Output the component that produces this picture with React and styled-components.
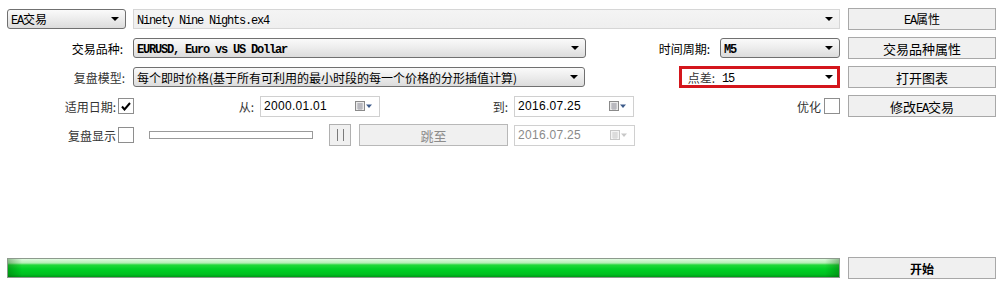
import React from 'react';
import styled, { createGlobalStyle } from 'styled-components';

const GlobalStyle = createGlobalStyle`
  body {
    margin: 0;
    background: #ffffff;
    font-family: "Noto Sans CJK SC", "Liberation Sans", sans-serif;
    font-size: 12px;
    color: #000;
  }
`;

const Page = styled.div`
  width: 1007px;
  height: 287px;
  box-sizing: border-box;
  padding: 8px 11px 8px 7px;
  display: flex;
  flex-direction: column;
  justify-content: space-between;
`;

const Top = styled.div`
  display: flex;
  gap: 8px;
`;

const Left = styled.div`
  width: 833px;
  display: flex;
  flex-direction: column;
  gap: 9px;
  padding-top: 1px;
`;

const Row = styled.div`
  height: 20px;
  display: flex;
  align-items: center;
`;

const Label = styled.div`
  width: ${p => p.$w}px;
  text-align: right;
  padding-right: ${p => p.$pr ?? 4}px;
  box-sizing: border-box;
  white-space: nowrap;
  flex-shrink: 0;
  color: ${p => (p.$light ? '#333' : '#000')};
`;

const Combo = styled.div`
  width: ${p => p.$w}px;
  height: 20px;
  box-sizing: border-box;
  border: 1px solid #707070;
  border-radius: 3px;
  background: linear-gradient(#fafafa, #ececec 50%, #dcdcdc);
  display: flex;
  align-items: center;
  padding: 0 6px 0 3px;
  white-space: nowrap;
  overflow: hidden;
`;

const FlatCombo = styled.div`
  flex: 1;
  margin-left: ${p => p.$ml || 0}px;
  height: ${p => (p.$plain ? 16 : 20)}px;
  box-sizing: border-box;
  border: ${p => (p.$plain ? 'none' : '1px solid #d6d6d6')};
  background: ${p => (p.$plain ? '#ffffff' : 'linear-gradient(#f4f4f4, #efefef)')};
  display: flex;
  align-items: center;
  padding: 0 ${p => (p.$plain ? 4 : 6)}px 0 3px;
  white-space: nowrap;
`;

const Mono = styled.span`
  font-family: "Liberation Mono", monospace;
  font-size: 12px;
  letter-spacing: -1.2px;
  font-weight: ${p => (p.$bold ? 700 : 400)};
`;

const ComboText = styled.span`
  flex: 1;
  overflow: hidden;
`;

const Arrow = styled.span`
  width: 0;
  height: 0;
  border-left: 4px solid transparent;
  border-right: 4px solid transparent;
  border-top: 4px solid ${p => p.$c || '#000'};
  flex-shrink: 0;
`;

const RedBox = styled.div`
  margin-left: 94px;
  width: 161px;
  height: 22px;
  flex-shrink: 0;
  box-sizing: border-box;
  border: 3px solid #d4161c;
  background: #fff;
  display: flex;
  align-items: center;
`;

const Check = styled.div`
  width: 16px;
  height: 16px;
  box-sizing: border-box;
  border: 1px solid #8e8e8e;
  background: #fff;
  display: flex;
  align-items: center;
  justify-content: center;
  flex-shrink: 0;
`;

const DateBox = styled.div`
  width: 121px;
  margin-left: ${p => p.$ml || 0}px;
  height: 21px;
  box-sizing: border-box;
  border: 1px solid #d0d0d0;
  background: #fff;
  display: flex;
  align-items: center;
  padding: 0 6px 0 3px;
  color: ${p => (p.$disabled ? '#8a8a8a' : '#000')};
`;

const DateText = styled.span`
  flex: 1;
  font-family: "Liberation Sans", sans-serif;
  font-size: 12px;
  letter-spacing: 0.3px;
`;

const Track = styled.div`
  width: 164px;
  height: 8px;
  margin-left: 15px;
  box-sizing: border-box;
  border: 1px solid #9a9a9a;
  background: #fff;
`;

const SmallBtn = styled.div`
  width: 22px;
  height: 22px;
  margin-left: 16px;
  box-sizing: border-box;
  border: 1px solid #b0b0b0;
  background: #f0f0f0;
  display: flex;
  align-items: center;
  justify-content: center;
  gap: 5px;
`;

const Bar = styled.span`
  width: 1px;
  height: 12px;
  background: #7a7a7a;
`;

const Button = styled.div`
  width: ${p => p.$w || 148}px;
  margin-left: ${p => p.$ml || 0}px;
  height: 22px;
  box-sizing: border-box;
  border: 1px solid ${p => (p.$disabled ? '#b8b8b8' : '#a8a8a8')};
  background: #f0f0f0;
  display: flex;
  align-items: center;
  justify-content: center;
  color: ${p => (p.$disabled ? '#8c8c8c' : '#000')};
  font-weight: ${p => (p.$bold ? 700 : 400)};
  font-size: ${p => (p.$big ? 13 : 12)}px;
`;

const ButtonText = styled.span`
  white-space: nowrap;
`;

const Buttons = styled.div`
  display: flex;
  flex-direction: column;
  gap: 7px;
`;

const Bottom = styled.div`
  display: flex;
  align-items: center;
  gap: 8px;
`;

const Progress = styled.div`
  width: 833px;
  height: 20px;
  box-sizing: border-box;
  border: 1px solid #8d9a8d;
  background:
    linear-gradient(90deg, rgba(0, 80, 0, 0.35), rgba(0, 0, 0, 0) 14px, rgba(0, 0, 0, 0) calc(100% - 14px), rgba(0, 80, 0, 0.35)),
    linear-gradient(#e0fae0 0, #b4eeb4 4px, #22d83a 6px, #00d125 55%, #00c020 85%, #009a18 100%);
`;

const Calendar = ({ disabled }) => (
  <svg width="18" height="10" viewBox="0 0 18 10" style={{ flexShrink: 0 }}>
    <rect x="0.5" y="0.5" width="9" height="9" fill={disabled ? '#f4f4f4' : '#eaeaea'} stroke={disabled ? '#c8c8c8' : '#8a8a8a'} />
    <path d="M2 3h6M2 5h6M2 7h6M4 2v7M6 2v7" stroke={disabled ? '#d4d4d4' : '#a8a8b0'} strokeWidth="1" />
    <path d="M11 3.5h6l-3 3.5z" fill={disabled ? '#c8c8c8' : '#3c5a8a'} />
  </svg>
);

const Tick = () => (
  <svg width="10" height="9" viewBox="0 0 10 9">
    <path d="M1 4.5l2.5 3L9 1" fill="none" stroke="#000" strokeWidth="2" />
  </svg>
);

export default function App() {
  return (
    <Page>
      <GlobalStyle />
      <Top>
        <Left>
          <Row>
            <Combo $w={119}>
              <ComboText><Mono>EA</Mono>交易</ComboText>
              <Arrow />
            </Combo>
            <FlatCombo $ml={7}>
              <ComboText><Mono>Ninety Nine Nights.ex4</Mono></ComboText>
              <Arrow />
            </FlatCombo>
          </Row>
          <Row>
            <Label $w={126} $pr={10}>交易品种:</Label>
            <Combo $w={453}>
              <ComboText><Mono $bold>EURUSD, Euro vs US Dollar</Mono></ComboText>
              <Arrow />
            </Combo>
            <Label $w={134} $pr={10}>时间周期:</Label>
            <Combo $w={120}>
              <ComboText><Mono $bold>M5</Mono></ComboText>
              <Arrow />
            </Combo>
          </Row>
          <Row>
            <Label $w={126} $pr={8} $light>复盘模型:</Label>
            <Combo $w={453}>
              <ComboText>每个即时价格(基于所有可利用的最小时段的每一个价格的分形插值计算)</ComboText>
              <Arrow />
            </Combo>
            <RedBox>
              <Label $w={37} $pr={4} $light>点差:</Label>
              <FlatCombo $plain>
                <ComboText><Mono>15</Mono></ComboText>
                <Arrow />
              </FlatCombo>
            </RedBox>
          </Row>
          <Row>
            <Label $w={111} $pr={2} $light>适用日期:</Label>
            <Check><Tick /></Check>
            <Label $w={126} $pr={6} $light>从:</Label>
            <DateBox>
              <DateText>2000.01.01</DateText>
              <Calendar />
            </DateBox>
            <Label $w={134} $pr={6} $light>到:</Label>
            <DateBox>
              <DateText>2016.07.25</DateText>
              <Calendar />
            </DateBox>
            <Label $w={190} $pr={3} $light>优化</Label>
            <Check />
          </Row>
          <Row>
            <Label $w={111} $pr={2} $light>复盘显示</Label>
            <Check />
            <Track />
            <SmallBtn><Bar /><Bar /></SmallBtn>
            <Button $w={149} $ml={8} $disabled $big>跳至</Button>
            <DateBox $ml={6} $disabled>
              <DateText>2016.07.25</DateText>
              <Calendar disabled />
            </DateBox>
          </Row>
        </Left>
        <Buttons>
          <Button><ButtonText><Mono>EA</Mono>属性</ButtonText></Button>
          <Button $big>交易品种属性</Button>
          <Button $big>打开图表</Button>
          <Button $big><ButtonText>修改<Mono>EA</Mono>交易</ButtonText></Button>
        </Buttons>
      </Top>
      <Bottom>
        <Progress />
        <Button $bold>开始</Button>
      </Bottom>
    </Page>
  );
}
